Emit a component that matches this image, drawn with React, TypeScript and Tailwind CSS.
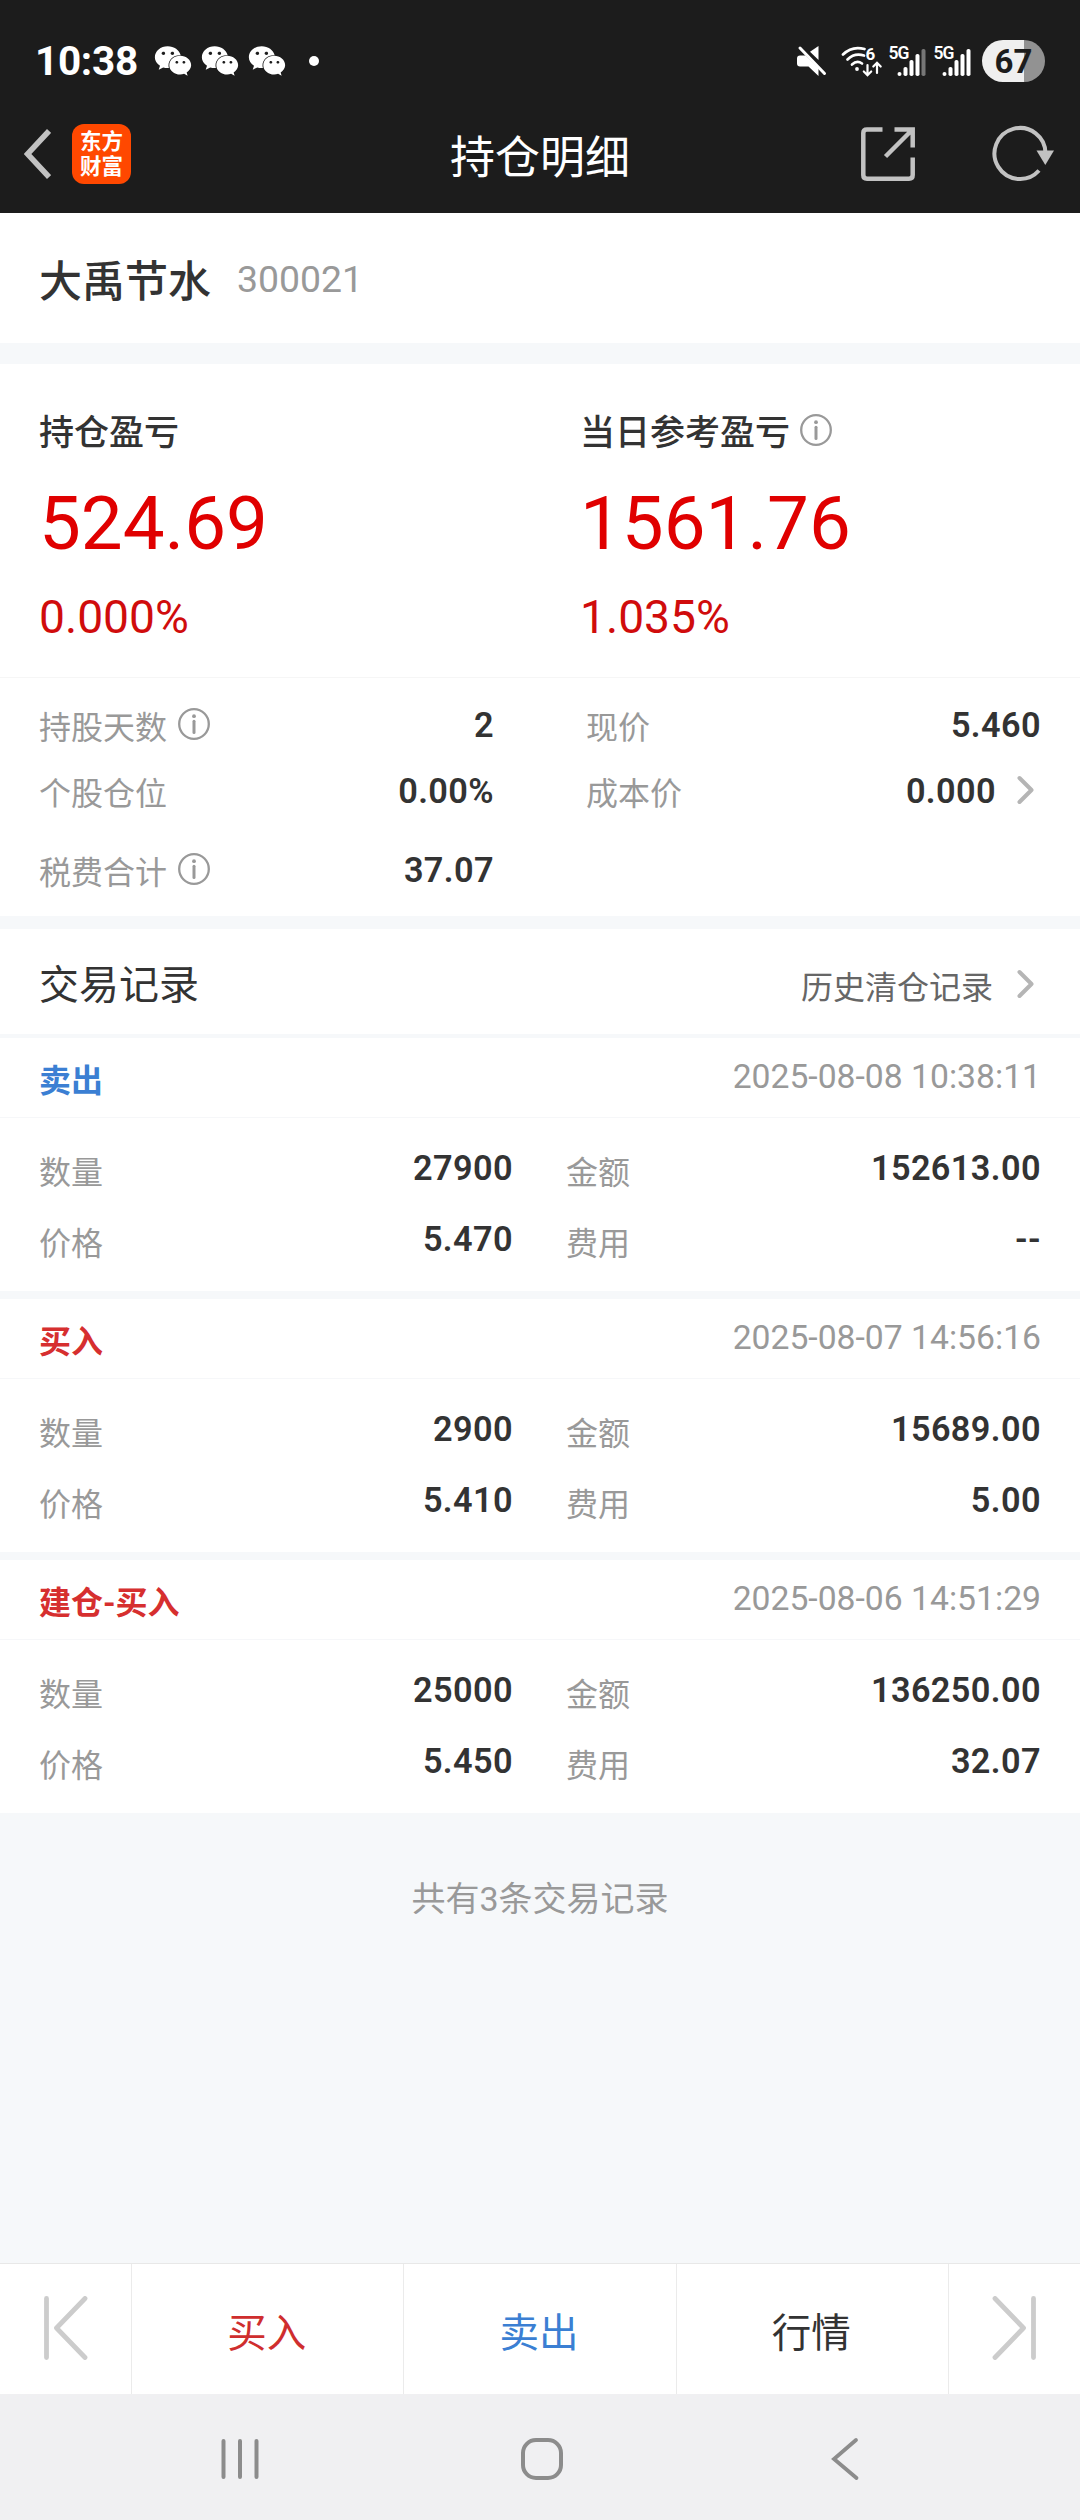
import { FaWeixin } from 'react-icons/fa';
import clsx from 'clsx';

interface TradeRecord {
  type: string;
  side: 'buy' | 'sell';
  time: string;
  quantity: string;
  amount: string;
  price: string;
  fee: string;
}

const records: TradeRecord[] = [
  { type: '卖出', side: 'sell', time: '2025-08-08 10:38:11', quantity: '27900', amount: '152613.00', price: '5.470', fee: '--' },
  { type: '买入', side: 'buy', time: '2025-08-07 14:56:16', quantity: '2900', amount: '15689.00', price: '5.410', fee: '5.00' },
  { type: '建仓-买入', side: 'buy', time: '2025-08-06 14:51:29', quantity: '25000', amount: '136250.00', price: '5.450', fee: '32.07' },
];

function InfoIcon() {
  return (
    <svg width="32" height="32" viewBox="0 0 32 32" fill="none" stroke="#999999" className="shrink-0">
      <circle cx="16" cy="16" r="14.8" strokeWidth="2.3" />
      <path d="M16 13.2V24.5" strokeWidth="3" strokeLinecap="round" />
      <circle cx="16" cy="8.2" r="1.9" fill="#999999" stroke="none" />
    </svg>
  );
}

function ChevronIcon() {
  return (
    <svg width="18" height="30" viewBox="0 0 18 30" fill="none" stroke="#b5b5b5" strokeWidth="4" className="shrink-0">
      <path d="M2.5 3L14.5 15L2.5 27" strokeLinecap="round" strokeLinejoin="round" />
    </svg>
  );
}

function Signal({ weak = false }: { weak?: boolean }) {
  return (
    <svg width="40" height="32" viewBox="0 0 40 32" fill="white" className="overflow-visible">
      <text x="0.5" y="14" fontSize="17.5" fontWeight="600" textLength="21" className="font-['Roboto',sans-serif]">5G</text>
      <rect x="9.5" y="27" width="4" height="4" rx="2" />
      <rect x="15.5" y="22" width="4" height="9" rx="1.8" />
      <rect x="21.5" y="15" width="4" height="16" rx="1.8" />
      <rect x="27.5" y="9" width="4" height="22" rx="1.8" />
      <rect x="33.5" y="4" width="4" height="27" rx="1.8" opacity={weak ? 0.4 : 1} />
    </svg>
  );
}

function StatusBar() {
  return (
    <div className="flex h-24 items-center justify-between pt-[26px] pr-[35px] pl-[35px]">
      <div className="flex items-center">
        <span className="w-[119px] text-[40.5px] leading-none font-bold tracking-[-0.3px] text-white">10:38</span>
        <div className="flex items-center gap-[9px] text-[38px] text-white">
          <FaWeixin />
          <FaWeixin />
          <FaWeixin />
        </div>
        <span className="ml-[23px] size-2.5 rounded-full bg-white" />
      </div>
      <div className="flex items-center">
        <svg width="30" height="32" viewBox="0 0 30 32" fill="white">
          <path d="M3 10.5H8.5L21.5 23.5V31L11.5 21.5H3Q0 21.5 0 18.5V13.5Q0 10.5 3 10.5Z" />
          <path d="M21.5 1V15L13 6.8Z" />
          <path d="M3 3L27.5 28.5" stroke="white" strokeWidth="3" strokeLinecap="round" />
        </svg>
        <svg width="42" height="32" viewBox="0 0 42 32" fill="none" stroke="white" strokeWidth="2.7" strokeLinecap="round" className="ml-3.5">
          <path d="M2 9.5Q11 0.5 23.5 4" />
          <path d="M6.5 14.5Q13.5 7.5 23 10.5" />
          <path d="M11 19.5Q16 15 21 18.5" />
          <circle cx="16" cy="24" r="1.9" fill="white" stroke="none" />
          <path d="M26.5 20V30M22.8 26.5L26.5 30.2L30.2 26.5" strokeWidth="2.2" />
          <path d="M36 28V18M32.3 21.5L36 17.8L39.7 21.5" strokeWidth="2.2" />
          <text x="24.5" y="14.5" fontSize="17" fontWeight="700" fill="white" stroke="none" className="font-['Roboto',sans-serif]">6</text>
        </svg>
        <div className="ml-[5px] flex gap-[5px]">
          <Signal weak />
          <Signal />
        </div>
        <div className="ml-[9px] flex h-[42px] w-[63px] items-center justify-center rounded-full bg-linear-to-r from-[#efefef] from-67% to-[#929292] to-67%">
          <span className="text-[33px] leading-none font-bold text-[#1c1c1c]">67</span>
        </div>
      </div>
    </div>
  );
}

function TitleBar() {
  return (
    <div className="flex h-[117px] items-center">
      <div className="flex flex-1 items-center gap-[21px] pb-px pl-6">
        <svg width="27" height="50" viewBox="0 0 27 50" fill="none" stroke="#c2c2c2" strokeWidth="5.5">
          <path d="M25 2L3.5 25L25 48" />
        </svg>
        <div className="flex h-[60px] w-[59px] flex-col items-center justify-center rounded-xl bg-[#ff4800] text-[21.5px] leading-[25px] font-bold text-white">
          <span>东方</span>
          <span>财富</span>
        </div>
      </div>
      <h1 className="pt-2 text-[45px] leading-none text-white">持仓明细</h1>
      <div className="flex flex-1 items-center justify-end gap-[77px] pr-6 pb-px">
        <svg width="54" height="54" viewBox="0 0 54 54" fill="none" stroke="#c2c2c2" strokeWidth="4.5">
          <path d="M21.5 2.5H6Q2.3 2.5 2.3 6V48Q2.3 51.7 6 51.7H48Q51.7 51.7 51.7 48V30.5" />
          <path d="M33.5 2.5H51.7V20.5M51 3L24.5 29.5" />
        </svg>
        <svg width="64" height="60" viewBox="0 0 64 60" fill="none" stroke="#c2c2c2" strokeWidth="4">
          <path d="M53.5 30A25.5 25.5 0 1 0 47 46.5" />
          <path d="M44.5 26.5H62L53.3 41Z" fill="#c2c2c2" stroke="none" />
        </svg>
      </div>
    </div>
  );
}

function Metric({ label, value, info, arrow }: { label: string; value: string; info?: boolean; arrow?: boolean }) {
  return (
    <div className="flex h-[66px] items-center justify-between">
      <div className="flex items-center gap-[11px]">
        <span className="pt-2 text-[32px] leading-none text-[#999999]">{label}</span>
        {info && <InfoIcon />}
      </div>
      <div className="flex items-center gap-[21px]">
        <span className="pt-0.5 text-[34.3px] leading-none font-semibold tracking-[0.4px] text-[#333333]">{value}</span>
        {arrow && <span className="pr-1.5"><ChevronIcon /></span>}
      </div>
    </div>
  );
}

function Profit({ label, amount, percent, info }: { label: string; amount: string; percent: string; info?: boolean }) {
  return (
    <div className="flex w-[541px] shrink-0 flex-col">
      <div className="flex h-8 items-center gap-2.5">
        <span className="pt-[7px] text-[35px] leading-none font-medium text-[#333333]">{label}</span>
        {info && <InfoIcon />}
      </div>
      <span className="mt-[41px] text-[74.5px] leading-[74px] text-[#e00000]">{amount}</span>
      <span className="mt-[29px] text-[46.2px] leading-[54px] text-[#d00c0c]">{percent}</span>
    </div>
  );
}

function RecordField({ label, value }: { label: string; value: string }) {
  return (
    <div className="flex h-[71px] items-center justify-between">
      <span className="pt-[9px] text-[32px] leading-none text-[#999999]">{label}</span>
      <span className="text-[34.3px] leading-none font-semibold tracking-[0.4px] text-[#333333]">{value}</span>
    </div>
  );
}

function RecordCard({ record }: { record: TradeRecord }) {
  return (
    <div className="bg-white">
      <div className="flex h-20 items-center justify-between border-b border-[#f6f7f9] px-[39px]">
        <span
          className={clsx(
            'pt-1.5 text-[32px] leading-none font-bold',
            record.side === 'buy' ? 'text-[#d62f2f]' : 'text-[#3b7fd3]'
          )}
        >
          {record.type}
        </span>
        <span className="pb-0.5 text-[33.7px] leading-none text-[#999999]">{record.time}</span>
      </div>
      <div className="grid grid-cols-[474px_475px] gap-x-[53px] px-[39px] pt-[15px] pb-4">
        <RecordField label="数量" value={record.quantity} />
        <RecordField label="金额" value={record.amount} />
        <RecordField label="价格" value={record.price} />
        <RecordField label="费用" value={record.fee} />
      </div>
    </div>
  );
}

function ActionBar() {
  return (
    <div className="flex h-[131px] divide-x divide-[#ebebeb] border-t border-[#e8e8e8] bg-white text-[39.5px] leading-none">
      <button className="flex w-[132px] items-center justify-center pb-0.5">
        <svg width="44" height="64" viewBox="0 0 44 64" fill="none" stroke="#cccccc" strokeWidth="4.8" strokeLinecap="round" strokeLinejoin="round">
          <path d="M2.5 2.5V61.5M41 2.5L12.5 32L41 61.5" />
        </svg>
      </button>
      <button className="flex-1 pt-2.5 pr-0.5 text-[#cf2e2e]">买入</button>
      <button className="flex-1 pt-2.5 pr-0.5 text-[#3b7fd3]">卖出</button>
      <button className="flex-1 pt-2.5 pr-0.5 text-[#333333]">行情</button>
      <button className="flex w-[131px] items-center justify-center pb-0.5">
        <svg width="44" height="64" viewBox="0 0 44 64" fill="none" stroke="#cccccc" strokeWidth="4.8" strokeLinecap="round" strokeLinejoin="round">
          <path d="M41.5 2.5V61.5M3 2.5L31.5 32L3 61.5" />
        </svg>
      </button>
    </div>
  );
}

function SystemNav() {
  return (
    <div className="flex h-[126px] items-center bg-[#f0f0f2] pt-1 pl-[220px]">
      <svg width="40" height="44" viewBox="0 0 40 44" fill="none" stroke="#8c8c8c" strokeWidth="4" strokeLinecap="round">
        <path d="M3.5 4V40M20 4V40M36.5 4V40" />
      </svg>
      <svg width="44" height="44" viewBox="0 0 44 44" fill="none" stroke="#8c8c8c" strokeWidth="4" className="ml-[260px]">
        <rect x="3" y="3" width="38" height="38" rx="13" />
      </svg>
      <svg width="30" height="44" viewBox="0 0 30 44" fill="none" stroke="#8c8c8c" strokeWidth="3.8" strokeLinecap="round" className="ml-[266px]">
        <path d="M26 3L4 22L26.5 41" />
      </svg>
    </div>
  );
}

export default function App() {
  return (
    <div className="flex h-[2520px] w-[1080px] flex-col overflow-hidden bg-[#f6f8fa] font-['Roboto','Noto_Sans_CJK_SC',sans-serif]">
      <header className="bg-[#1c1c1c]">
        <StatusBar />
        <TitleBar />
      </header>

      <section className="flex h-[130px] items-center gap-[26px] bg-white px-[39px]">
        <span className="pt-2 text-[43px] leading-none font-medium text-[#333333]">大禹节水</span>
        <span className="pt-[3px] text-[37.4px] leading-none text-[#999999]">300021</span>
      </section>

      <section className="mt-[21px] bg-white">
        <div className="flex h-[314px] border-b border-[#f6f6f6] pt-[50px] pl-[39px]">
          <Profit label="持仓盈亏" amount="524.69" percent="0.000%" />
          <Profit label="当日参考盈亏" amount="1561.76" percent="1.035%" info />
        </div>
        <div className="grid grid-cols-[455px_455px] gap-x-[92px] px-[39px] pt-[13px] pb-[14px]">
          <Metric label="持股天数" value="2" info />
          <Metric label="现价" value="5.460" />
          <Metric label="个股仓位" value="0.00%" />
          <Metric label="成本价" value="0.000" arrow />
          <div className="pt-[13px]">
            <Metric label="税费合计" value="37.07" info />
          </div>
        </div>
      </section>

      <section className="mt-[13px] flex h-[105px] items-center justify-between bg-white pr-[45px] pl-[39px]">
        <h2 className="pt-2 text-[40px] leading-none text-[#333333]">交易记录</h2>
        <div className="flex items-center gap-6">
          <span className="pt-3 text-[32px] leading-none text-[#666666]">历史清仓记录</span>
          <span className="pt-[5px]"><ChevronIcon /></span>
        </div>
      </section>

      <main className="mt-1 flex flex-col gap-2">
        {records.map((record) => (
          <RecordCard key={record.time} record={record} />
        ))}
      </main>

      <p className="pt-[69px] text-center text-[34px] leading-none text-[#999999]">共有3条交易记录</p>

      <footer className="mt-auto">
        <ActionBar />
        <SystemNav />
      </footer>
    </div>
  );
}
